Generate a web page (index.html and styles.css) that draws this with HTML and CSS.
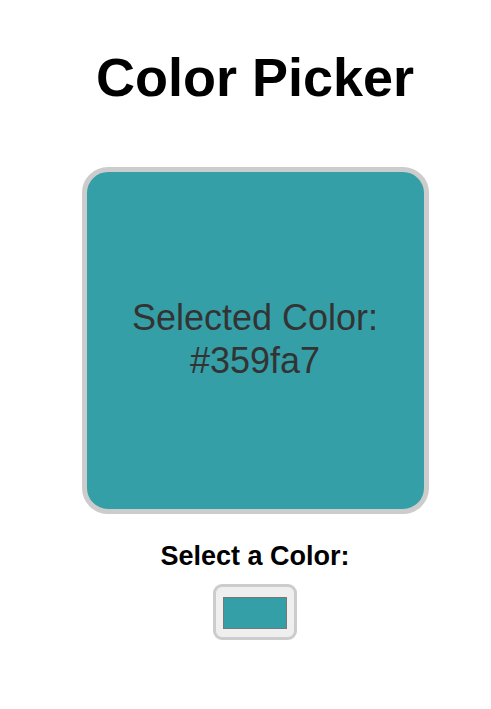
FILE: index.html
```html
<!DOCTYPE html>
<html lang="en">
<head>
<meta charset="utf-8">
<title>Color Picker</title>
<link rel="stylesheet" href="styles.css">
</head>
<body>
<main class="app">
  <h1 class="title">Color Picker</h1>
  <div class="preview">
    <p class="preview-text">Selected Color: #359fa7</p>
  </div>
  <label class="picker-label" for="picker">Select a Color:</label>
  <input class="picker" id="picker" type="color" value="#359fa7">
</main>
</body>
</html>
```
FILE: styles.css
```css
html, body {
  margin: 0;
  padding: 0;
  background: #ffffff;
}

body {
  font-family: "Liberation Sans", Arial, sans-serif;
  font-size: 18px;
  color: #000;
  padding-left: 19px;
}

.app {
  display: flex;
  flex-direction: column;
  align-items: center;
}

.title {
  margin: 46px 0 0;
  font-size: 54px;
  font-weight: bold;
  line-height: 62px;
}

.preview {
  margin-top: 59px;
  box-sizing: border-box;
  width: 347px;
  height: 347px;
  border: 5px solid #cccccc;
  border-radius: 26px;
  background: #359fa7;
  display: flex;
  align-items: center;
  justify-content: center;
  padding: 0 20px 4px;
}

.preview-text {
  margin: 0;
  font-size: 36px;
  line-height: 43px;
  color: #333333;
  text-align: center;
}

.picker-label {
  margin-top: 27px;
  font-size: 27px;
  font-weight: bold;
  line-height: 31px;
}

.picker {
  margin-top: 12px;
  box-sizing: border-box;
  width: 84px;
  height: 56px;
  padding: 10px 7px 8px;
  border: 3px solid #cccccc;
  border-radius: 9px;
  background: #efefef;
  cursor: pointer;
}

.picker::-webkit-color-swatch-wrapper {
  padding: 0;
}

.picker::-webkit-color-swatch {
  border: 1px solid #777777;
  border-radius: 0;
}
```
